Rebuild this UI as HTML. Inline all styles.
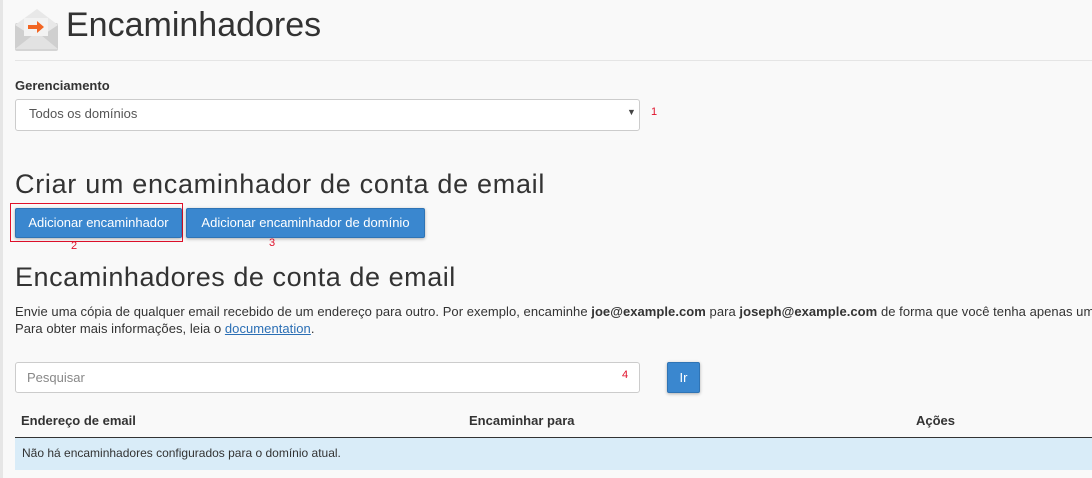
<!DOCTYPE html>
<html><head><meta charset="utf-8"><style>
body{margin:0;width:1092px;height:478px;overflow:hidden;background:#f9f9f9;font-family:"Liberation Sans",sans-serif;color:#333;position:relative}
.lb{position:absolute;left:0;top:0;width:3px;height:478px;background:#e6e6e6}
.a{position:absolute;white-space:nowrap}
.btn{position:absolute;background:#3a87cf;border:1px solid #2f74b5;color:#fff;font-size:13px;border-radius:2px;box-shadow:0 1px 3px rgba(0,0,0,.3);text-align:center}
.red{color:#e0102a;font-size:11px}
</style></head><body>
<div class="lb"></div>
<svg class="a" style="left:15px;top:9px" width="44" height="42" viewBox="0 0 44 42">
<rect x="0" y="14" width="43" height="28" rx="2" fill="#d4d4d4"/>
<path d="M0 16 L22 0 L43 16 L43 40 L0 40Z" fill="#e8e8e8"/>
<path d="M0 16 L22 30 L43 16 L43 40 L0 40Z" fill="#cfcfcf"/>
<path d="M0 40 L18 26 L26 26 L43 40Z" fill="#e2e2e2"/>
<rect x="9" y="9" width="24" height="18" fill="#f2f2f2"/>
<path d="M13 16 h9 v-4 l7 6 l-7 6 v-4 h-9z" fill="#f26522"/>
</svg>
<div class="a" style="left:66px;top:6px;font-size:34px;color:#333">Encaminhadores</div>
<div class="a" style="left:15px;top:60px;width:1077px;height:1px;background:#e5e5e5"></div>
<div class="a" style="left:15px;top:78px;font-size:13px;font-weight:bold">Gerenciamento</div>
<div class="a" style="left:15px;top:99px;width:623px;height:30px;background:#fff;border:1px solid #ccc;border-radius:3px"></div>
<div class="a" style="left:29px;top:106px;font-size:13px;color:#555">Todos os domínios</div>
<div class="a" style="left:627px;top:107px;font-size:9px;color:#444">▼</div>
<div class="a red" style="left:651px;top:106px">1</div>
<div class="a" style="left:15px;top:169px;font-size:27px;letter-spacing:0.7px">Criar um encaminhador de conta de email</div>
<div class="a" style="left:10px;top:203px;width:171px;height:37px;border:1px solid #e0102a"></div>
<div class="btn" style="left:15px;top:208px;width:165px;height:28px;line-height:28px">Adicionar encaminhador</div>
<div class="btn" style="left:186px;top:208px;width:237px;height:28px;line-height:28px">Adicionar encaminhador de domínio</div>
<div class="a red" style="left:71px;top:240px">2</div>
<div class="a red" style="left:269px;top:237px">3</div>
<div class="a" style="left:15px;top:262px;font-size:27px;letter-spacing:0.55px">Encaminhadores de conta de email</div>
<div class="a" style="left:15px;top:303px;font-size:13px;line-height:17px;letter-spacing:0.05px">Envie uma cópia de qualquer email recebido de um endereço para outro. Por exemplo, encaminhe <b>joe@example.com</b> para <b>joseph@example.com</b> de forma que você tenha apenas um<br>Para obter mais informações, leia o <span style="color:#2b6fb5;text-decoration:underline">documentation</span>.</div>
<div class="a" style="left:15px;top:362px;width:623px;height:29px;background:#fff;border:1px solid #ccc;border-radius:3px"></div>
<div class="a" style="left:27px;top:370px;font-size:13px;color:#888">Pesquisar</div>
<div class="a red" style="left:622px;top:369px">4</div>
<div class="btn" style="left:667px;top:362px;width:31px;height:29px;line-height:29px">Ir</div>
<div class="a" style="left:21px;top:413px;font-size:13px;font-weight:bold">Endereço de email</div>
<div class="a" style="left:469px;top:413px;font-size:13px;font-weight:bold">Encaminhar para</div>
<div class="a" style="left:916px;top:413px;font-size:13px;font-weight:bold">Ações</div>
<div class="a" style="left:15px;top:437px;width:1077px;height:32px;background:#d9ecf8;border-top:1px solid #333"></div>
<div class="a" style="left:22px;top:446px;font-size:12px">Não há encaminhadores configurados para o domínio atual.</div>
</body></html>
